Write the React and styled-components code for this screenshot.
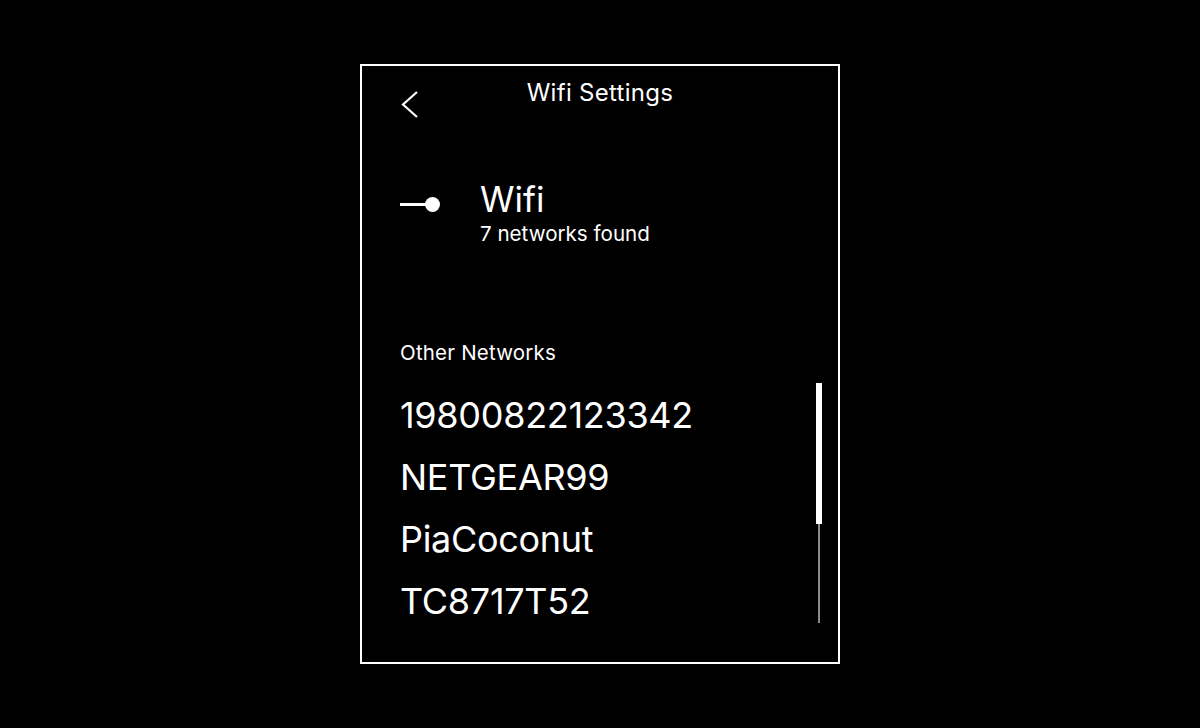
import React from 'react'
import styled, { createGlobalStyle } from 'styled-components'

const GlobalStyle = createGlobalStyle`
    html, body {
        margin: 0;
        padding: 0;
        background: #000;
    }
    body {
        font-family: Inter, "Liberation Sans", sans-serif;
        color: #fff;
    }
`

const Page = styled.div`
    width: 1200px;
    height: 728px;
    display: flex;
    align-items: center;
    justify-content: center;
    background: #000;
`

const Panel = styled.div`
    width: 480px;
    height: 600px;
    box-sizing: border-box;
    border: 2px solid #fff;
    padding: 14px 16px 0 38px;
    display: flex;
    flex-direction: column;
`

const Header = styled.div`
    display: grid;
    grid-template-columns: 1fr auto 1fr;
    margin-right: 22px;
    height: 60px;
`

const BackButton = styled.button`
    background: transparent;
    border: none;
    padding: 0;
    margin-top: 11px;
    width: 20px;
    height: 28px;
    cursor: pointer;
    justify-self: start;
    align-self: start;
`

const Title = styled.div`
    font-size: 24px;
    line-height: 26px;
    font-weight: 400;
    letter-spacing: 0.3px;
`

const ToggleRow = styled.div`
    display: flex;
    align-items: flex-start;
    gap: 40px;
    margin-top: 38px;
`

const Toggle = styled.div`
    position: relative;
    width: 40px;
    height: 16px;
    margin-top: 19px;
`

const ToggleLine = styled.div`
    position: absolute;
    left: 0;
    top: 6px;
    width: 28px;
    height: 3px;
    background: #fff;
`

const ToggleKnob = styled.div`
    position: absolute;
    left: 25px;
    top: 0;
    width: 15px;
    height: 15px;
    border-radius: 50%;
    background: #fff;
`

const ToggleText = styled.div`
    display: flex;
    flex-direction: column;
`

const WifiLabel = styled.div`
    font-size: 35px;
    line-height: 42px;
`

const Found = styled.div`
    font-size: 20.6px;
    line-height: 24px;
    margin-top: 2px;
`

const SectionLabel = styled.div`
    font-size: 20.5px;
    line-height: 24px;
    margin-top: 95px;
    letter-spacing: 0.2px;
`

const ListArea = styled.div`
    display: flex;
    justify-content: space-between;
    margin-top: 19px;
`

const NetworkList = styled.div`
    display: flex;
    flex-direction: column;
`

const Network = styled.div`
    font-size: 36px;
    line-height: 62px;
    height: 62px;
    letter-spacing: -0.3px;
`

const ScrollTrack = styled.div`
    position: relative;
    width: 6px;
    height: 240px;
    margin-top: -1px;
    &::before {
        content: '';
        position: absolute;
        left: 2px;
        top: 0;
        width: 2px;
        height: 100%;
        background: #8a8a8a;
    }
`

const ScrollThumb = styled.div`
    position: relative;
    width: 6px;
    height: 141px;
    background: #fff;
`

const networks = ['19800822123342', 'NETGEAR99', 'PiaCoconut', 'TC8717T52']

export default function App() {
    return (
        <>
            <GlobalStyle />
            <Page>
                <Panel>
                    <Header>
                        <BackButton aria-label="Back">
                            <svg width="18" height="27" viewBox="0 0 18 27" fill="none">
                                <path d="M16 1 L2 13.5 L16 26" stroke="#fff" strokeWidth="2.2" />
                            </svg>
                        </BackButton>
                        <Title>Wifi Settings</Title>
                    </Header>
                    <ToggleRow>
                        <Toggle>
                            <ToggleLine />
                            <ToggleKnob />
                        </Toggle>
                        <ToggleText>
                            <WifiLabel>Wifi</WifiLabel>
                            <Found>7 networks found</Found>
                        </ToggleText>
                    </ToggleRow>
                    <SectionLabel>Other Networks</SectionLabel>
                    <ListArea>
                        <NetworkList>
                            {networks.map(n => (
                                <Network key={n}>{n}</Network>
                            ))}
                        </NetworkList>
                        <ScrollTrack>
                            <ScrollThumb />
                        </ScrollTrack>
                    </ListArea>
                </Panel>
            </Page>
        </>
    )
}
